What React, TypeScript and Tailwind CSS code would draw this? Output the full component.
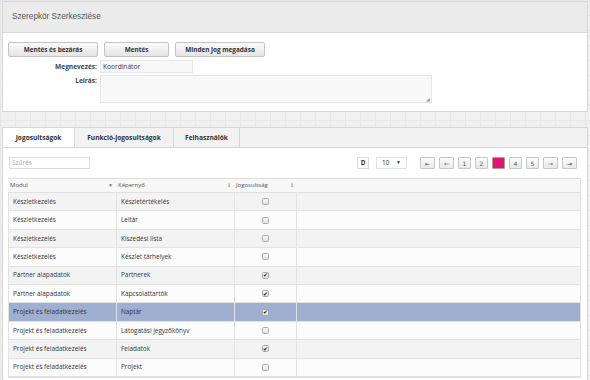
const ROWS = [
  { modul: 'Készletkezelés', screen: 'Készletértékelés', on: false },
  { modul: 'Készletkezelés', screen: 'Leltár', on: false },
  { modul: 'Készletkezelés', screen: 'Kiszedési lista', on: false },
  { modul: 'Készletkezelés', screen: 'Készlet tárhelyek', on: false },
  { modul: 'Partner alapadatok', screen: 'Partnerek', on: true },
  { modul: 'Partner alapadatok', screen: 'Kapcsolattartók', on: true },
  { modul: 'Projekt és feladatkezelés', screen: 'Naptár', on: true, selected: true },
  { modul: 'Projekt és feladatkezelés', screen: 'Látogatási jegyzőkönyv', on: false },
  { modul: 'Projekt és feladatkezelés', screen: 'Feladatok', on: true },
  { modul: 'Projekt és feladatkezelés', screen: 'Projekt', on: false },
];

const PAGES = [
  { label: '⇤', w: 'w-[15px]' },
  { label: '⇐', w: 'w-[15px]' },
  { label: '1', w: 'w-[13px]' },
  { label: '2', w: 'w-[13px]' },
  { label: '3', w: 'w-[13px]', active: true },
  { label: '4', w: 'w-[13px]' },
  { label: '5', w: 'w-[13px]' },
  { label: '⇒', w: 'w-[15px]' },
  { label: '⇥', w: 'w-[15px]' },
];

function Checkbox({ on }: { on: boolean }) {
  return (
    <span className="flex h-[7px] w-[7px] items-center justify-center rounded-[1.5px] border border-[#a9a9a9] bg-gradient-to-b from-[#fafafa] to-[#e2e2e2] text-[6px] leading-none text-[#111]">
      {on ? '✔' : ''}
    </span>
  );
}

function SortIcon({ down }: { down?: boolean }) {
  return (
    <span className="text-[5px] leading-none text-[#777]">{down ? '▼' : '⇕'}</span>
  );
}

export default function App() {
  return (
    <div className="h-[380px] w-[590px] overflow-hidden bg-[#f0f0f0] bg-[linear-gradient(to_right,#e7e7e7_1px,transparent_1px),linear-gradient(to_bottom,#e7e7e7_1px,transparent_1px)] bg-[size:15px_15px] px-[2px] pt-[1px] font-['Open_Sans',sans-serif] text-[#333]">
      {/* Role editor panel */}
      <div className="h-[111px] border border-[#d6d6d6] bg-white">
        <div className="flex h-[31px] items-center border-b border-[#dadada] bg-[#ebebeb] pl-[9px] font-['Liberation_Sans',Arial,sans-serif] text-[8.2px] text-[#555]">
          Szerepkör Szerkesztése
        </div>
        <div className="flex gap-[6px] pl-[5px] pt-[9px]">
          {[
            ['Mentés és bezárás', 'w-[90px]'],
            ['Mentés', 'w-[65px]'],
            ['Minden jog megadása', 'w-[90px]'],
          ].map(([label, w]) => (
            <button
              key={label}
              className={`${w} h-[15px] rounded-[2px] border border-[#c4c4c4] bg-gradient-to-b from-[#fbfbfb] to-[#e4e4e4] text-[6.4px] font-bold text-[#333]`}
            >
              {label}
            </button>
          ))}
        </div>
        <div className="mt-[3px] flex items-start">
          <div className="flex w-[94px] justify-end pt-[2px] text-[6.6px] font-bold text-[#444]">Megnevezés:</div>
          <div className="ml-[3px] flex h-[13px] w-[93px] items-center border border-[#e6e6e6] bg-[#f8f8f8] pl-[2px] text-[6.6px] text-[#3a2e55]">
            Koordinátor
          </div>
        </div>
        <div className="mt-[2px] flex items-start">
          <div className="flex w-[94px] justify-end pt-[1px] text-[6.6px] font-bold text-[#444]">Leírás:</div>
          <div className="relative ml-[3px] h-[28px] w-[332px] border border-[#e6e6e6] bg-[#f8f8f8]">
            <span className="absolute bottom-0 right-[1px] text-[5px] leading-none text-[#999]">◢</span>
          </div>
        </div>
      </div>

      {/* Tabs panel */}
      <div className="mt-[15px] border border-[#d6d6d6] bg-white">
        <div className="flex h-[20px] border-b border-[#d6d6d6] bg-[#f2f2f2] text-[6.6px] font-bold text-[#333]">
          <div className="flex w-[71px] items-center justify-center bg-white">Jogosultságok</div>
          <div className="flex w-[99px] items-center justify-center border-l border-[#d6d6d6]">Funkció-jogosultságok</div>
          <div className="flex w-[67px] items-center justify-center border-x border-[#d6d6d6]">Felhasználók</div>
        </div>

        <div className="px-[5px] pr-[6px] pb-[2px]">
          <div className="flex h-[30px] items-center">
            <div className="ml-[1px] flex h-[12px] w-[81px] items-center border border-[#dcdcdc] pl-[2px] text-[6.4px] text-[#aaa]">Szűrés</div>
            <div className="ml-auto flex items-center">
              <div className="flex h-[12px] w-[12px] items-center justify-center border border-[#dcdcdc] text-[6.4px] font-bold">D</div>
              <div className="ml-[7px] flex h-[12px] w-[31px] items-center justify-between border border-[#e2e2e2] px-[5px] text-[6.4px]">
                <span>10</span>
                <span className="text-[5px]">▼</span>
              </div>
              <div className="ml-[13px] flex gap-[4px] pr-[4px]">
                {PAGES.map((p) => (
                  <div
                    key={p.label}
                    className={`${p.w} flex h-[12px] items-center justify-center rounded-[1px] border text-[6px] ${
                      p.active
                        ? 'border-[#b0a07a] bg-[#e0127b] text-[#e0127b]'
                        : 'border-[#c8c8c8] bg-gradient-to-b from-[#fcfcfc] to-[#e9e9e9] text-[#555]'
                    } font-['DejaVu_Sans',sans-serif]`}
                  >
                    {p.label}
                  </div>
                ))}
              </div>
            </div>
          </div>

          <div className="border-b border-r border-[#e0e0e0] text-[6.4px]">
            <div className="flex h-[15px] border-y border-[#e0e0e0] bg-[#f7f7f7] text-[6px] text-[#555]">
              <div className="flex w-[108px] items-center justify-between pl-[2px] pr-[3px]">
                <span>Modul</span>
                <SortIcon down />
              </div>
              <div className="flex w-[118px] items-center justify-between pl-[2px] pr-[3px]">
                <span>Képernyő</span>
                <SortIcon />
              </div>
              <div className="flex w-[63px] items-center justify-between pl-[2px] pr-[3px]">
                <span>Jogosultság</span>
                <SortIcon />
              </div>
              <div className="flex-1" />
            </div>
            {ROWS.map((r, i) => (
              <div
                key={r.screen}
                className={`flex h-[18.4px] border-b border-[#e2e2e2] ${
                  r.selected ? 'bg-[#9fafd2]' : i % 2 === 0 ? 'bg-[#f3f3f3]' : 'bg-[#fcfcfc]'
                }`}
              >
                <div className="flex w-[108px] items-center border-l border-[#e2e2e2] pl-[4px]">{r.modul}</div>
                <div className="flex w-[118px] items-center border-l border-[#e2e2e2] pl-[4px]">{r.screen}</div>
                <div className="flex w-[63px] items-center justify-center border-x border-[#e2e2e2]">
                  <Checkbox on={r.on} />
                </div>
                <div className="flex-1" />
              </div>
            ))}
          </div>
        </div>
      </div>
    </div>
  );
}
